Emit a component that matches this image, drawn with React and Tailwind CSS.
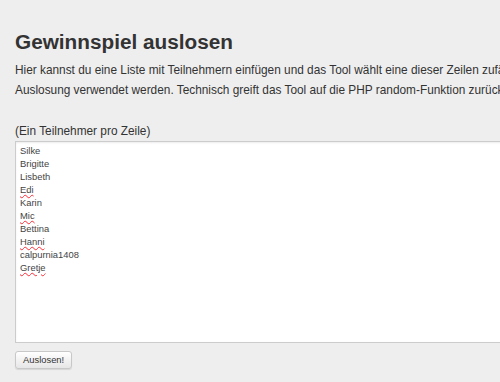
import React from 'react';

const names = ['Silke', 'Brigitte', 'Lisbeth', 'Edi', 'Karin', 'Mic', 'Bettina', 'Hanni', 'calpurnia1408', 'Gretje'];
const flagged = ['Edi', 'Mic', 'Hanni', 'Gretje'];

const App = () => {
    return (
        <div className="h-[382px] w-[500px] overflow-hidden bg-[#eeeeee] font-['Liberation_Sans',Arial,sans-serif] text-[#333333]">
            <div className="w-[760px] pl-[15px] pt-[30px]">
                <h1 className="text-[20.75px] font-bold leading-[24px]">Gewinnspiel auslosen</h1>
                <p className="mt-[6px] whitespace-nowrap text-[11.85px] leading-[20px]">
                    Hier kannst du eine Liste mit Teilnehmern einfügen und das Tool wählt eine dieser Zeilen zufällig aus. Das Ergebnis kann z.B. für eine
                    <br />
                    Auslosung verwendet werden. Technisch greift das Tool auf die PHP random-Funktion zurück.
                </p>

                <div className="mt-[23px] text-[11.85px] leading-[16px]">(Ein Teilnehmer pro Zeile)</div>
                <div className="mt-[2px] h-[202px] w-[720px] border border-[#cccccc] bg-white px-[4px] py-[2px] text-[9.4px] leading-[13px] text-[#444444] shadow-[inset_0_1px_2px_rgba(0,0,0,0.08)]">
                    {names.map((name) => (
                        <div key={name}>
                            <span className={flagged.includes(name) ? 'underline decoration-wavy decoration-red-500 decoration-1 underline-offset-1' : ''}>{name}</span>
                        </div>
                    ))}
                </div>

                <button className="mt-[8px] h-[18px] rounded-[3px] border border-[#c8c8c8] bg-gradient-to-b from-white to-[#e6e6e6] px-[7px] text-[9.4px] leading-[16px] text-[#333333] shadow-[0_1px_1px_rgba(0,0,0,0.1)]">
                    Auslosen!
                </button>
            </div>
        </div>
    );
};

export default App;
